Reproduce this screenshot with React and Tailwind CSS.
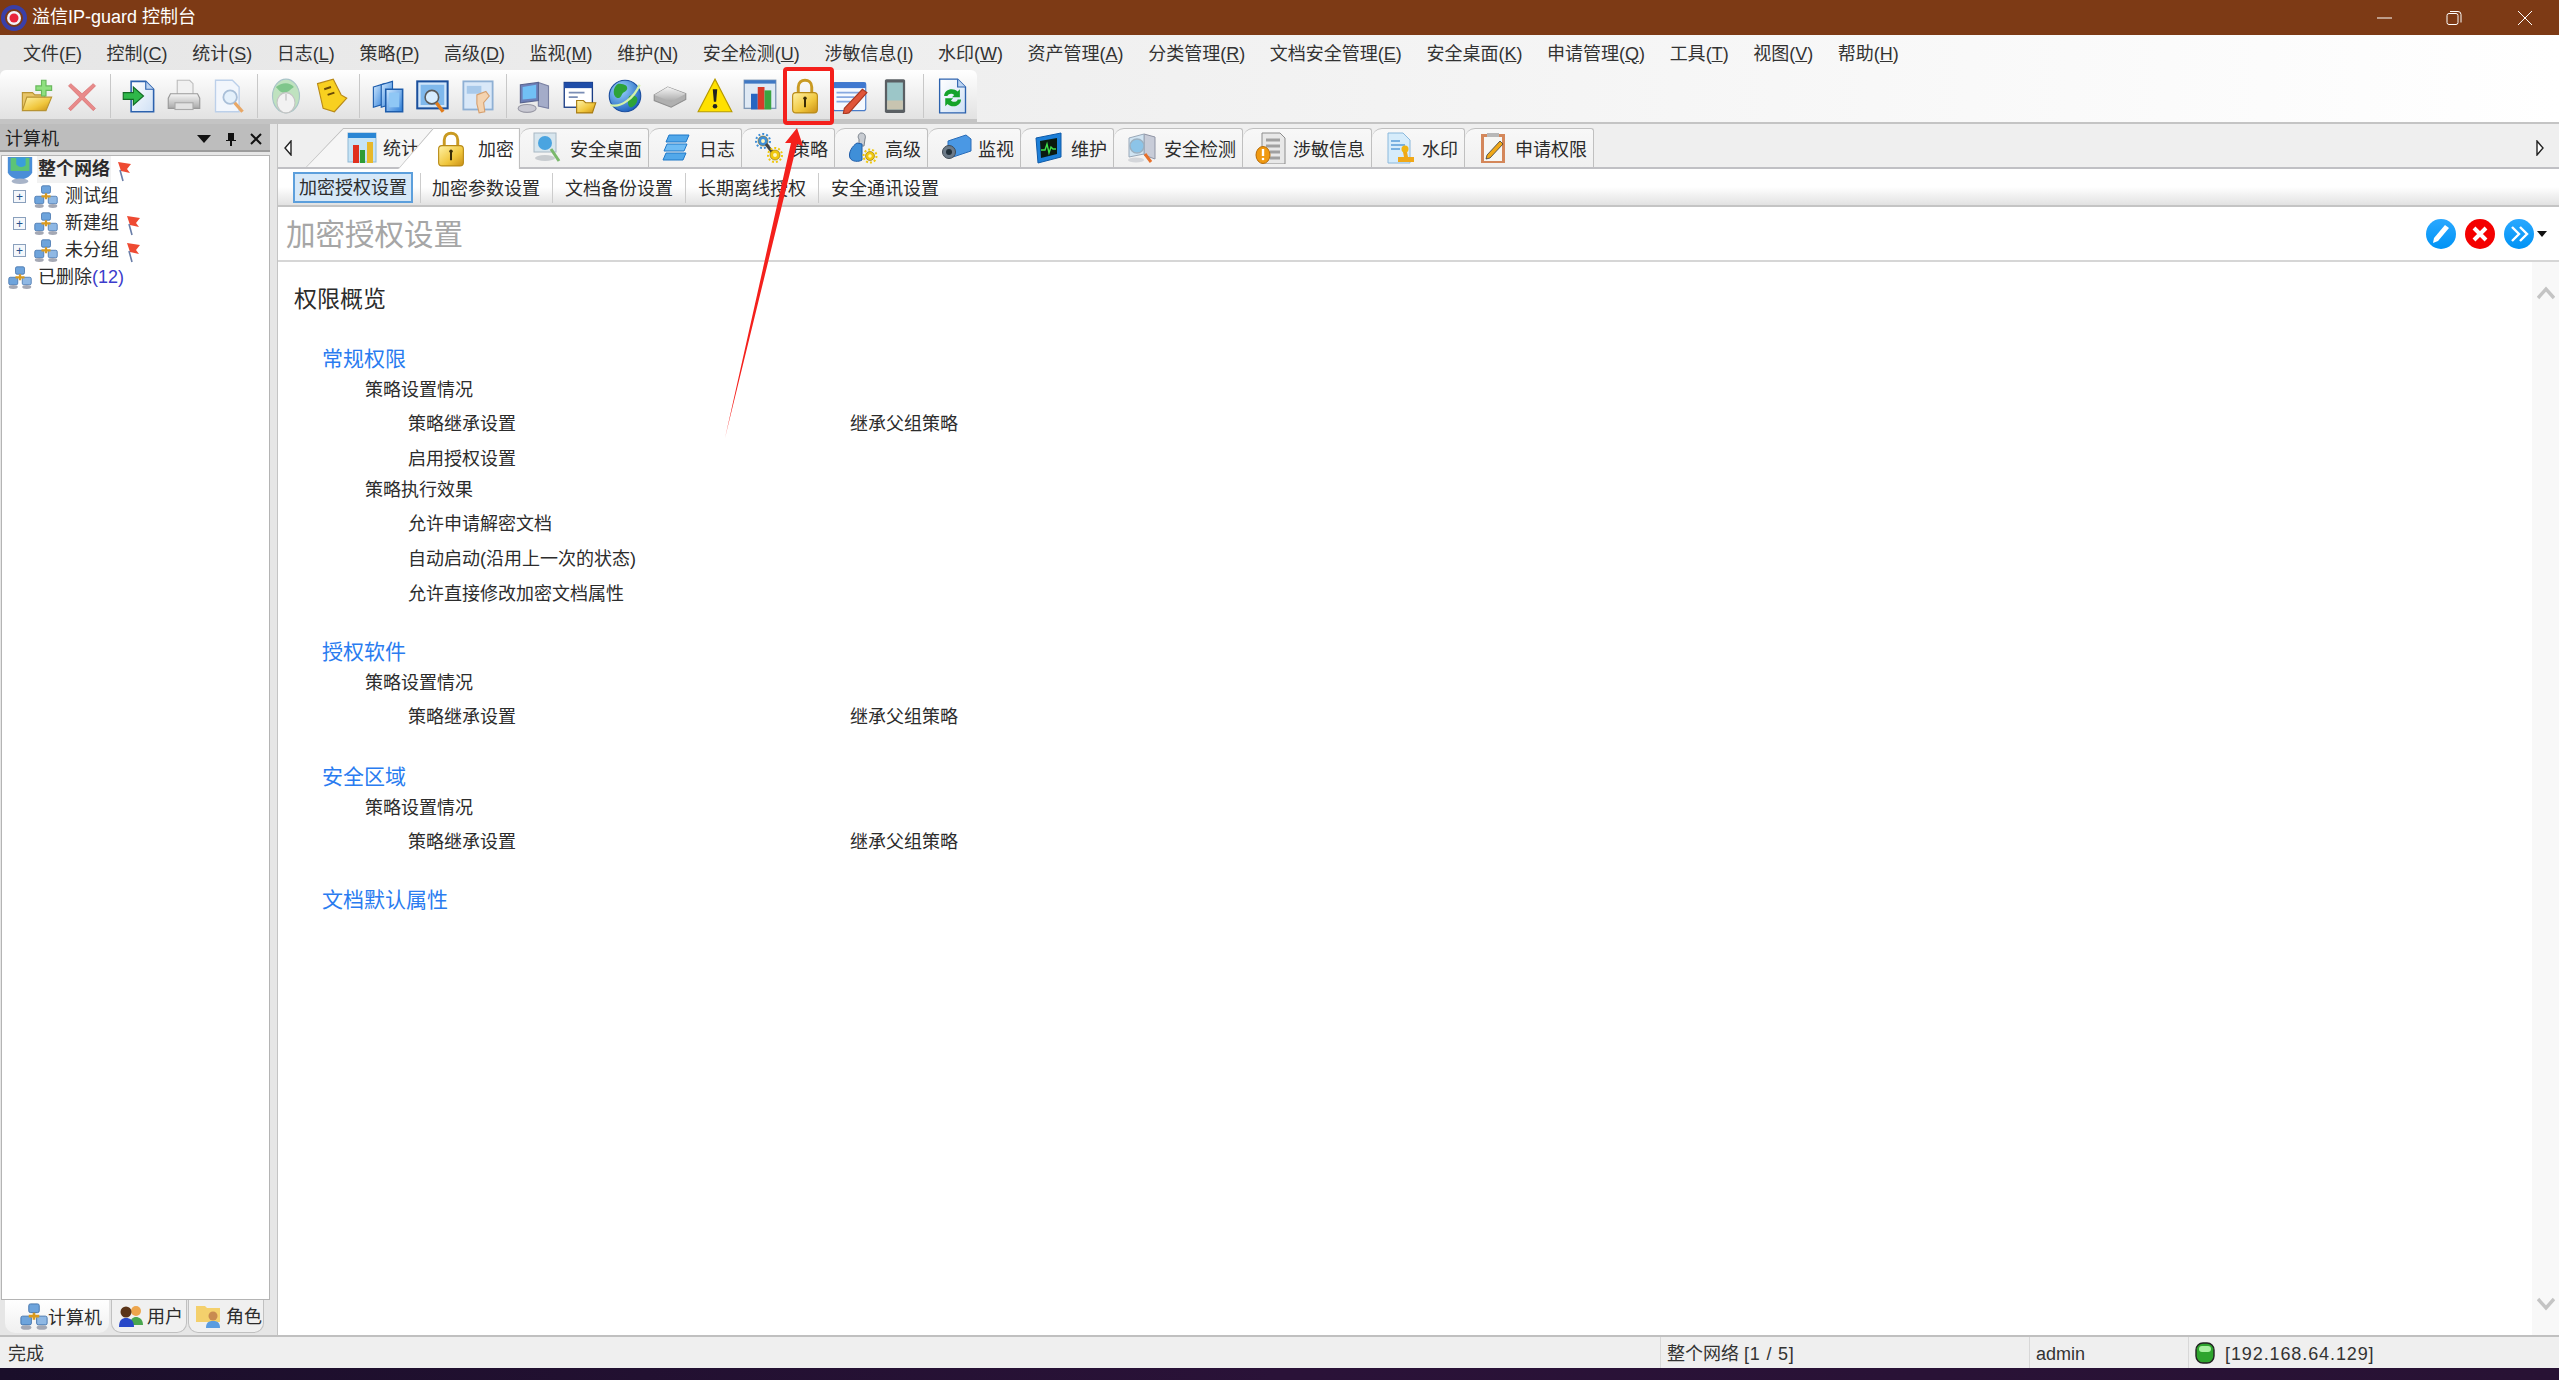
import React from "react";

const Svg = ({ size = 36, children, className = "" }) => (
  <svg width={size} height={size} viewBox="0 0 32 32" className={"shrink-0 " + className}>
    {children}
  </svg>
);

const Defs = () => (
  <svg className="absolute h-0 w-0">
    <defs>
      <linearGradient id="gold" x1="0" y1="0" x2="1" y2="1">
        <stop offset="0" stopColor="#fff3a8" />
        <stop offset="0.6" stopColor="#f0c63c" />
        <stop offset="1" stopColor="#c98f16" />
      </linearGradient>
      <linearGradient id="blue" x1="0" y1="0" x2="1" y2="1">
        <stop offset="0" stopColor="#cfe8ff" />
        <stop offset="1" stopColor="#2f7fd8" />
      </linearGradient>
      <linearGradient id="grey" x1="0" y1="0" x2="0" y2="1">
        <stop offset="0" stopColor="#f6f6f6" />
        <stop offset="1" stopColor="#a9a9a9" />
      </linearGradient>
      <linearGradient id="paper" x1="0" y1="0" x2="1" y2="1">
        <stop offset="0" stopColor="#ffffff" />
        <stop offset="1" stopColor="#cfe0f5" />
      </linearGradient>
      <radialGradient id="earth" cx="0.35" cy="0.3" r="0.8">
        <stop offset="0" stopColor="#9fd8ff" />
        <stop offset="1" stopColor="#1257b8" />
      </radialGradient>
      <linearGradient id="sky" x1="0" y1="0" x2="0" y2="1">
        <stop offset="0" stopColor="#2aa8ff" />
        <stop offset="1" stopColor="#0093f5" />
      </linearGradient>
    </defs>
  </svg>
);

const OpenIcon = () => (
  <Svg>
    <path d="M3 13h9l2 2h9v13H3z" fill="#e8c568" stroke="#b89433" />
    <path d="M7 17h22l-5 12H3z" fill="url(#gold)" stroke="#b89433" />
    <path d="M20 2h4v5h5v4h-5v5h-4v-5h-5V7h5z" fill="#8fe07f" stroke="#68b85c" />
  </Svg>
);
const DeleteIcon = () => (
  <Svg>
    <path d="M6 5l10 9 10-9 2 2-10 10 10 10-2 2-10-10L6 29l-2-2 10-10L4 7z" fill="#e88a8a" stroke="#d66a6a" strokeWidth="0.6" />
  </Svg>
);
const ImportIcon = () => (
  <Svg>
    <path d="M9 3h13l7 7v20H9z" fill="url(#paper)" stroke="#2c62ae" strokeWidth="1.4" />
    <path d="M22 3v7h7" fill="#bcd4f2" stroke="#2c62ae" />
    <path d="M2 13h9V8l9 8-9 8v-5H2z" fill="#2fb84a" stroke="#136b25" />
  </Svg>
);
const PrintIcon = () => (
  <Svg>
    <path d="M10 2h11l3 3v10H10z" fill="#f1f1f1" stroke="#bdbdbd" />
    <path d="M4 14h24l2 4v9H2v-9z" fill="url(#grey)" stroke="#999" />
    <rect x="8" y="22" width="16" height="6" fill="#e2e2e2" stroke="#aaa" />
  </Svg>
);
const PreviewIcon = () => (
  <Svg>
    <path d="M4 2h15l6 6v22H4z" fill="#f2f6fc" stroke="#bcd0ea" strokeWidth="1.2" />
    <circle cx="17" cy="17" r="6" fill="#e4f0fb" stroke="#a9bfd8" strokeWidth="1.6" />
    <path d="M21 22l7 8" stroke="#e8a766" strokeWidth="3" />
  </Svg>
);
const GlobeMouseIcon = () => (
  <Svg>
    <ellipse cx="16" cy="16" rx="12" ry="15" fill="#bfe2bf" stroke="#a8c4c8" />
    <path d="M7 8c5-4 12-5 16 0-3 2-5 5-9 5-3 0-5-3-7-5z" fill="#7fc68b" />
    <ellipse cx="16" cy="22" rx="8" ry="9" fill="#f2f2f2" stroke="#c4c4c4" />
    <path d="M16 14v6" stroke="#bbb" />
  </Svg>
);
const NoteIcon = () => (
  <Svg>
    <path d="M4 5l14-4 7 14 5 3-11 12-10-3z" fill="#f8d020" stroke="#b98a18" />
    <path d="M10 10l6-2M13 15l6-2" stroke="#6a4a08" strokeWidth="1.8" />
  </Svg>
);
const CopiesIcon = () => (
  <Svg>
    <path d="M3 8l10-3v18L3 26z" fill="url(#blue)" stroke="#1d5cab" />
    <path d="M10 6l10-3v20l-10 3z" fill="url(#blue)" stroke="#1d5cab" />
    <path d="M14 10h15v20H14z" fill="url(#blue)" stroke="#1d5cab" strokeWidth="1.4" />
    <rect x="17" y="13" width="9" height="13" fill="#8fc7f5" />
  </Svg>
);
const SearchWinIcon = () => (
  <Svg>
    <rect x="2" y="3" width="27" height="24" fill="#cfe5fa" stroke="#1a4f9c" strokeWidth="1.8" />
    <rect x="5" y="6" width="21" height="18" fill="#7fb8ec" />
    <circle cx="15" cy="17" r="6" fill="#d6ecff" stroke="#5a5a5a" strokeWidth="1.4" />
    <path d="M19 22l6 8" stroke="#e07c1c" strokeWidth="3" />
  </Svg>
);
const HandWinIcon = () => (
  <Svg>
    <rect x="3" y="3" width="26" height="25" fill="#d9e8f8" stroke="#8fb0d4" strokeWidth="1.6" />
    <rect x="6" y="7" width="13" height="7" fill="#a8c9ea" />
    <path d="M15 15l8-3 3 4-5 6 1 8-5 1-2-8z" fill="#f4d3b0" stroke="#d6a070" />
  </Svg>
);
const PcIcon = () => (
  <Svg>
    <path d="M19 4l9 3v20l-9-2z" fill="#a4acc9" stroke="#7b82a3" />
    <path d="M3 6l16-2v16L3 22z" fill="#6d7fb8" stroke="#59648f" />
    <path d="M5 8l12-2v12L5 19z" fill="#71c0f5" />
    <ellipse cx="9" cy="27" rx="8" ry="3.5" fill="#c9c9d3" stroke="#9a9aa6" />
  </Svg>
);
const WindowFolderIcon = () => (
  <Svg>
    <rect x="2" y="4" width="25" height="22" fill="#fff" stroke="#1a3d85" strokeWidth="1.2" />
    <rect x="2" y="4" width="25" height="5" fill="#1f4da8" />
    <path d="M6 13h14M6 17h8" stroke="#7a8db5" strokeWidth="1.6" />
    <path d="M13 20h6l2 2h9l-3 9H13z" fill="url(#gold)" stroke="#a77b12" />
  </Svg>
);
const EarthIcon = () => (
  <Svg>
    <circle cx="16" cy="16" r="14" fill="url(#earth)" stroke="#1c4f9f" />
    <path d="M10 5c4 0 8 1 8 4s-4 3-5 6-4 4-6 1-1-9 3-11zM20 16c3-1 7 0 7 3s-3 7-6 7-3-8-1-10z" fill="#2da339" />
    <path d="M3 24C12 27 24 18 29 6" stroke="#d4f2a8" strokeWidth="2" fill="none" />
  </Svg>
);
const DiskIcon = () => (
  <Svg>
    <path d="M2 15l12-7 16 6v5l-13 7L2 20z" fill="#b0b0b0" stroke="#8f8f8f" />
    <path d="M2 15l12-7 16 6-13 7z" fill="url(#grey)" />
  </Svg>
);
const WarnIcon = () => (
  <Svg>
    <path d="M16 1L31 30H1z" fill="#ffe100" stroke="#b79a00" />
    <path d="M14 10h4l-1 11h-2z" fill="#222" />
    <circle cx="16" cy="25" r="2" fill="#222" />
  </Svg>
);
const ChartWinIcon = () => (
  <Svg>
    <rect x="2" y="2" width="28" height="25" fill="#dfe9f4" stroke="#7f98b6" strokeWidth="1.2" />
    <rect x="2" y="2" width="28" height="3" fill="#3f78c4" />
    <rect x="8" y="14" width="6" height="14" fill="#2766c2" />
    <rect x="14" y="8" width="6" height="20" fill="#d93a2a" />
    <rect x="20" y="11" width="6" height="17" fill="#3ba441" />
  </Svg>
);
const LockIcon = ({ size = 36 }) => (
  <Svg size={size}>
    <path d="M10 14V8c0-8 12-8 12 0v6" fill="none" stroke="#c99a22" strokeWidth="2.6" />
    <rect x="5" y="13" width="22" height="18" rx="3" fill="url(#gold)" stroke="#b88a16" />
    <path d="M16 18v8" stroke="#3a2c06" strokeWidth="1.8" />
    <circle cx="16" cy="18" r="1.5" fill="#3a2c06" />
  </Svg>
);
const PencilWinIcon = () => (
  <Svg>
    <rect x="1" y="4" width="29" height="25" rx="2" fill="#f5f9ff" stroke="#4a7cc8" />
    <rect x="1" y="4" width="29" height="5" fill="#3f78d0" />
    <path d="M4 13h20M4 17h16M4 21h12" stroke="#86a8e0" strokeWidth="1.4" />
    <path d="M27 10l4 3-16 18-5 1 1-5z" fill="#e0553a" stroke="#a83820" />
  </Svg>
);
const PhoneIcon = () => (
  <Svg>
    <rect x="7" y="1" width="18" height="30" rx="1.5" fill="#5a5f63" />
    <rect x="9" y="4" width="14" height="24" fill="#9cc6c8" />
    <path d="M9 20h14v8H9z" fill="#c8c4b0" />
  </Svg>
);
const RefreshIcon = () => (
  <Svg>
    <path d="M5 1h16l7 7v23H5z" fill="url(#paper)" stroke="#2c62ae" strokeWidth="1.2" />
    <path d="M21 1v7h7" fill="#bcd4f2" stroke="#2c62ae" />
    <path d="M9 16c0-6 8-8 12-4l2-2v7h-7l2-2c-2-2-6-1-6 1zM24 19c0 6-8 8-12 4l-2 2v-7h7l-2 2c2 2 6 1 6-1z" fill="#15a32a" />
  </Svg>
);

const StatTabIcon = () => (
  <Svg size={32}>
    <rect x="2" y="1" width="28" height="29" fill="#c6e4f6" stroke="#8fb8d4" />
    <rect x="2" y="1" width="28" height="5" fill="#2a86d4" />
    <rect x="7" y="13" width="6" height="18" fill="#e0301e" />
    <rect x="14" y="18" width="5" height="13" fill="#2e9c34" />
    <rect x="21" y="10" width="6" height="21" fill="#e8b82a" />
  </Svg>
);
const DeskTabIcon = () => (
  <Svg size={32}>
    <rect x="2" y="1" width="22" height="19" fill="#d8e6ee" stroke="#a8b8c4" />
    <circle cx="13" cy="11" r="7" fill="#4aa4e0" />
    <ellipse cx="13" cy="26" rx="10" ry="3" fill="#c8ccd0" />
    <path d="M19 17l8 12" stroke="#7ab86c" strokeWidth="3" />
  </Svg>
);
const LogTabIcon = () => (
  <Svg size={32}>
    <path d="M8 3h20l-3 7H5z" fill="#52a8ea" stroke="#1f78c8" />
    <path d="M6 12h20l-3 7H3z" fill="#6fbcf4" stroke="#1f78c8" />
    <path d="M5 21h20l-3 7H2z" fill="#52a8ea" stroke="#1f78c8" />
  </Svg>
);
const Gear = ({ x, y, r, fill }) => (
  <g>
    <circle cx={x} cy={y} r={r} fill={fill} stroke="#8a6a08" strokeWidth="0.6" />
    <circle cx={x} cy={y} r={r + 2} fill="none" stroke={fill} strokeWidth="2" strokeDasharray="2 2" />
    <circle cx={x} cy={y} r={r / 2.6} fill="#fff6c0" />
  </g>
);
const PolicyTabIcon = () => (
  <Svg size={32}>
    <Gear x={9} y={9} r={5} fill="#3f8fd8" />
    <path d="M12 12l7 9" stroke="#444" strokeWidth="3" />
    <Gear x={21} y={23} r={5} fill="#f0c80e" />
  </Svg>
);
const WrenchTabIcon = () => (
  <Svg size={32}>
    <path d="M14 1c4 0 5 3 4 6l-1 7h-5V7c-2-2 0-6 2-6z" fill="#c8ccd2" stroke="#7a828c" />
    <path d="M10 11c-5 3-9 10-7 15 2 4 9 4 12 2V12z" fill="#3f8fd8" stroke="#1f5ca8" />
    <Gear x={23} y={24} r={4.5} fill="#f0c80e" />
  </Svg>
);
const CameraTabIcon = () => (
  <Svg size={32}>
    <path d="M8 9l18-6 5 4v12l-18 6-5-4z" fill="#4a98e4" stroke="#2a6cb8" />
    <circle cx="9" cy="20" r="6.5" fill="#6c7a88" stroke="#404a54" />
    <circle cx="9" cy="20" r="3" fill="#22303a" />
  </Svg>
);
const MonitorTabIcon = () => (
  <Svg size={32}>
    <path d="M3 6L28 1v24L5 31z" fill="#1c7fd8" stroke="#0f5aa8" />
    <path d="M7 9l17-3v16L8 26z" fill="#0a1a10" />
    <path d="M8 18h4l2-6 2 9 2-6 2 2h3" stroke="#3fe04a" strokeWidth="1.4" fill="none" />
  </Svg>
);
const CheckTabIcon = () => (
  <Svg size={32}>
    <path d="M18 2l11 3v22l-11-4z" fill="#c8ccd8" stroke="#8f94a4" />
    <path d="M3 6l15-4v20L3 25z" fill="#d0e4f2" stroke="#9aa8b8" />
    <circle cx="11" cy="14" r="7" fill="#8cc4e8" stroke="#9cb0c0" strokeWidth="1.4" />
    <path d="M19 22l6 8" stroke="#e8702a" strokeWidth="3" />
    <ellipse cx="10" cy="28" rx="8" ry="2.6" fill="#d4d6da" />
  </Svg>
);
const SensitiveTabIcon = () => (
  <Svg size={32}>
    <path d="M7 1h18l5 5v26H7z" fill="#e8e8e8" stroke="#8c8c8c" />
    <path d="M11 8h14M11 14h14M15 20h10M15 26h10" stroke="#a0a0a0" strokeWidth="3" />
    <ellipse cx="8" cy="23" rx="7" ry="8.5" fill="#f09a12" stroke="#b86c08" />
    <path d="M8 17v7" stroke="#fff" strokeWidth="2.4" />
    <circle cx="8" cy="27" r="1.3" fill="#fff" />
  </Svg>
);
const StampTabIcon = () => (
  <Svg size={32}>
    <path d="M4 1h15l7 7v23H4z" fill="#d6ecfb" stroke="#8ab8dc" />
    <path d="M7 9h9M7 13h14M7 17h9" stroke="#5a9cd8" strokeWidth="1.4" />
    <circle cx="21" cy="17" r="3.5" fill="#f0b414" />
    <path d="M19 20h4l1 5h6v5H14v-5h6z" fill="#f0a818" />
  </Svg>
);
const ClipTabIcon = () => (
  <Svg size={32}>
    <rect x="4" y="2" width="24" height="29" fill="#d4875a" />
    <rect x="7" y="5" width="18" height="24" fill="#f6f6f4" />
    <rect x="10" y="1" width="12" height="4" fill="#b8b8b8" />
    <path d="M23 9l3 3-13 14-4 1 1-4z" fill="#f0a818" stroke="#3a3a3a" strokeWidth="0.8" />
  </Svg>
);

const GroupIcon = ({ size = 24 }) => (
  <Svg size={size}>
    <rect x="10" y="1" width="12" height="10" rx="2" fill="#6ea4dc" stroke="#3d6ea8" />
    <rect x="1" y="15" width="12" height="10" rx="2" fill="#6ea4dc" stroke="#3d6ea8" />
    <rect x="19" y="15" width="12" height="10" rx="2" fill="#8fb8e4" stroke="#3d6ea8" />
    <path d="M16 11v8M10 15h12" stroke="#d89a20" strokeWidth="3" />
    <ellipse cx="7" cy="28" rx="6" ry="2.6" fill="#a4a8b4" />
    <ellipse cx="25" cy="28" rx="6" ry="2.6" fill="#a4a8b4" />
  </Svg>
);
const NetIcon = () => (
  <Svg size={30}>
    <path d="M3 2h26v17c-3 5-8 7-13 7S6 24 3 19z" fill="#4a8ed8" />
    <path d="M6 3h20v14H6z" fill="#5cc476" />
    <path d="M12 3h10v8c-3 3-7 2-10-1z" fill="#3a9edc" />
    <ellipse cx="16" cy="28" rx="9" ry="3" fill="#a8b4c8" />
  </Svg>
);
const FlagIcon = () => (
  <svg width="16" height="24" viewBox="0 0 16 24" className="shrink-0">
    <path d="M2 4l13 2-4 5 3 4-9-2z" fill="#ee4a32" />
    <path d="M4 12l3 11" stroke="#6a7ea8" strokeWidth="1.6" />
  </svg>
);

const Expander = () => (
  <div className="flex h-[13px] w-[13px] shrink-0 items-center justify-center border border-[#8aa0bc] bg-[#f4f7fb] text-[12px] leading-none text-[#24508c]">
    +
  </div>
);

const menus = [
  ["文件", "F"],
  ["控制", "C"],
  ["统计", "S"],
  ["日志", "L"],
  ["策略", "P"],
  ["高级", "D"],
  ["监视", "M"],
  ["维护", "N"],
  ["安全检测", "U"],
  ["涉敏信息", "I"],
  ["水印", "W"],
  ["资产管理", "A"],
  ["分类管理", "R"],
  ["文档安全管理", "E"],
  ["安全桌面", "K"],
  ["申请管理", "Q"],
  ["工具", "T"],
  ["视图", "V"],
  ["帮助", "H"],
];

const tools = [
  [OpenIcon, DeleteIcon],
  [ImportIcon, PrintIcon, PreviewIcon],
  [GlobeMouseIcon, NoteIcon],
  [CopiesIcon, SearchWinIcon, HandWinIcon],
  [PcIcon, WindowFolderIcon, EarthIcon, DiskIcon, WarnIcon, ChartWinIcon, LockIcon, PencilWinIcon, PhoneIcon],
  [RefreshIcon],
];

const tabs = [
  ["安全桌面", DeskTabIcon, "w-[129px]"],
  ["日志", LogTabIcon, "w-[93px]"],
  ["策略", PolicyTabIcon, "w-[93px]"],
  ["高级", WrenchTabIcon, "w-[93px]"],
  ["监视", CameraTabIcon, "w-[93px]"],
  ["维护", MonitorTabIcon, "w-[93px]"],
  ["安全检测", CheckTabIcon, "w-[129px]"],
  ["涉敏信息", SensitiveTabIcon, "w-[129px]"],
  ["水印", StampTabIcon, "w-[93px]"],
  ["申请权限", ClipTabIcon, "w-[129px]"],
];

const subTabs = ["加密参数设置", "文档备份设置", "长期离线授权", "安全通讯设置"];

const Inherit = () => <div className="ml-[442px]">继承父组策略</div>;

const Level2 = ({ children }) => (
  <div className="mb-[4px] flex h-[26px] items-center pl-[86px] text-[18px]">{children}</div>
);
const Level3 = ({ children, value }) => (
  <div className="flex h-[35px] items-center pl-[129px] text-[18px]">
    <div className="w-[0px] whitespace-nowrap">{children}</div>
    {value && <Inherit />}
  </div>
);
const Section = ({ children, className = "" }) => (
  <div className={"mb-[3px] flex h-[30px] items-center pl-[43px] text-[21px] text-[#2a7cf0] " + className}>{children}</div>
);

const TreeRow = ({ name, flag }) => (
  <div className="flex h-[27px] items-center">
    <div className="ml-[11px] w-[21px]">
      <Expander />
    </div>
    <GroupIcon />
    <span className="ml-[7px]">{name}</span>
    {flag && <span className="ml-[6px]"><FlagIcon /></span>}
  </div>
);

export default function App() {
  return (
    <div className="relative flex h-screen w-full flex-col overflow-hidden bg-[#e6e6e6] font-['Liberation_Sans','Noto_Sans_CJK_SC',sans-serif] text-[#2c2c2c]">
      <Defs />

      {/* title bar */}
      <div className="flex h-[35px] shrink-0 items-center bg-[#7d3a15] text-[18px] text-white">
        <svg width="26" height="30" viewBox="0 0 26 30" className="ml-[1px] shrink-0">
          <circle cx="13" cy="15" r="11" fill="none" stroke="#3a3fa8" strokeWidth="4" />
          <circle cx="13" cy="15" r="7" fill="#f2f2f8" />
          <circle cx="13" cy="15" r="4.5" fill="#e8243c" />
        </svg>
        <span className="ml-[5px] whitespace-nowrap">溢信IP-guard 控制台</span>
        <div className="ml-auto flex items-center">
          <svg width="16" height="16" viewBox="0 0 16 16" className="mr-[53px]"><path d="M0 8h15" stroke="#fff" /></svg>
          <svg width="16" height="16" viewBox="0 0 16 16" className="mr-[55px]">
            <rect x="1" y="3.5" width="11" height="11" rx="2" fill="none" stroke="#fff" />
            <path d="M4 1.5h8a3 3 0 0 1 3 3v8" fill="none" stroke="#fff" />
          </svg>
          <svg width="16" height="16" viewBox="0 0 16 16" className="mr-[26px]"><path d="M1 1l14 14M15 1L1 15" stroke="#fff" /></svg>
        </div>
      </div>

      {/* menu + toolbar band */}
      <div className="relative h-[87px] shrink-0 bg-gradient-to-r from-[#e6e6e6] via-[#f2f2f2] to-white">
        <div className="flex h-[35px] items-center gap-[24.6px] pl-[23px] pt-[3px] text-[18px] text-[#333]">
          {menus.map(([name, key], i) => (
            <span key={i} className="whitespace-nowrap">
              {name}(<span className="underline">{key}</span>)
            </span>
          ))}
        </div>
        <div className="flex h-[52px] w-[977px] items-center rounded-tr-[6px] rounded-tl-[6px] border-b-[3px] border-[#c4c4c4] bg-gradient-to-b from-white to-[#e2e2e2] pl-[14px] pt-[2px]">
          {tools.map((group, g) => (
            <React.Fragment key={g}>
              {g > 0 && (
                <div className="flex h-[44px] w-[12px] justify-center">
                  <div className="h-full w-[1px] bg-[#c8c8c8]" />
                </div>
              )}
              {group.map((Icon, i) => (
                <div key={i} className="flex w-[45px] justify-center">
                  <Icon />
                </div>
              ))}
            </React.Fragment>
          ))}
        </div>
      </div>

      {/* main */}
      <div className="flex min-h-0 flex-1">
        {/* left panel */}
        <aside className="flex w-[277px] shrink-0 flex-col border-t-[2px] border-[#c4c4c4] pr-[7px]">
          <div className="flex h-[28px] shrink-0 items-center border-b-[2px] border-[#9c9c9c] bg-[#bdbdbd] pl-[5px] pt-[4px] text-[18px] text-[#222]">
            计算机
            <div className="ml-auto flex items-center text-[#111]">
              <svg width="14" height="10" viewBox="0 0 14 10" className="mr-[14px]"><path d="M0 1h14L7 9z" fill="#111" /></svg>
              <svg width="12" height="14" viewBox="0 0 12 14" className="mr-[13px]"><path d="M3 1h6v7h2v1H7v5H5V9H1V8h2z" fill="#111" /></svg>
              <svg width="12" height="12" viewBox="0 0 12 12" className="mr-[8px]"><path d="M1 1l10 10M11 1L1 11" stroke="#111" strokeWidth="2" /></svg>
            </div>
          </div>
          <div className="mt-[3px] ml-[1px] min-h-0 flex-1 border border-[#b4b4b4] bg-white text-[18px]">
            <div className="flex h-[27px] items-center">
              <span className="ml-[3px] w-[30px]"><NetIcon /></span>
              <span className="ml-[2px] bg-[#f2f2f2] px-[1px] font-bold">整个网络</span>
              <span className="ml-[5px]"><FlagIcon /></span>
            </div>
            <TreeRow name="测试组" />
            <TreeRow name="新建组" flag />
            <TreeRow name="未分组" flag />
            <div className="flex h-[27px] items-center">
              <span className="ml-[6px]"><GroupIcon /></span>
              <span className="ml-[6px]">已删除<span className="text-[#3c3ccc]">(12)</span></span>
            </div>
          </div>
          <div className="flex h-[35px] shrink-0 items-start pl-[5px] text-[18px]">
            <div className="flex h-[33px] w-[104px] items-center rounded-b-[10px] bg-gradient-to-b from-white to-[#f0f0f0] pl-[15px]">
              <GroupIcon size={28} />
              <span className="pt-[3px]">计算机</span>
            </div>
            <div className="ml-[2px] flex h-[33px] w-[76px] items-center rounded-b-[10px] border-x border-b border-[#c0c0c0] bg-[#f0f0f0] pl-[6px]">
              <svg width="26" height="26" viewBox="0 0 26 26" className="shrink-0">
                <circle cx="18" cy="8" r="5" fill="#eda54c" />
                <path d="M12 22c0-6 3-8 6-8s7 2 7 8z" fill="#49a64e" />
                <circle cx="8" cy="9" r="5.5" fill="#5a3418" />
                <path d="M1 24c0-7 3-9 7-9s8 2 8 9z" fill="#2848c8" />
              </svg>
              <span className="ml-[3px] pt-[3px]">用户</span>
            </div>
            <div className="ml-[1px] flex h-[33px] w-[76px] items-center rounded-b-[10px] border-x border-b border-[#c0c0c0] bg-[#f0f0f0] pl-[6px]">
              <svg width="28" height="26" viewBox="0 0 28 26" className="shrink-0">
                <path d="M1 3h9l2 2h13v14H1z" fill="#f4d06c" />
                <circle cx="18" cy="13" r="4.5" fill="#c88a50" />
                <path d="M11 25c0-6 3-7 7-7s7 1 7 7z" fill="#5a9ce0" />
              </svg>
              <span className="ml-[3px] pt-[3px]">角色</span>
            </div>
          </div>
        </aside>

        {/* right area */}
        <main className="flex min-w-0 flex-1 flex-col border-l-[1px] border-t-[2px] border-[#c4c4c4]">
          {/* tab row */}
          <div className="flex h-[45px] shrink-0 items-end border-b-[2px] border-[#c0c0c4] bg-[#efefef] pl-[6px] text-[18px]">
            <svg width="8" height="16" viewBox="0 0 8 16" className="mb-[11px] shrink-0"><path d="M7 1v14L1 8z" fill="#fff" stroke="#222" strokeWidth="1.4" /></svg>
            <div className="relative ml-[14px] flex h-[39px] w-[127px] shrink-0 items-center bg-[#f6f6f6] pl-[40px] [clip-path:polygon(0_100%,37px_0,100%_0,100%_100%)]">
              <svg width="127" height="39" viewBox="0 0 127 39" className="absolute left-0 top-0">
                <path d="M0 39L37 0.5H127" fill="none" stroke="#c0c0c0" strokeWidth="1.2" />
              </svg>
              <StatTabIcon />
              <span className="ml-[5px] whitespace-nowrap pt-[4px]">统计</span>
            </div>
            <div className="relative z-10 -mb-[2px] -ml-[35px] flex h-[41px] w-[122px] shrink-0 items-center bg-white pl-[35px] [clip-path:polygon(0_100%,35px_0,100%_0,100%_100%)]">
              <svg width="122" height="41" viewBox="0 0 122 41" className="absolute left-0 top-0">
                <path d="M0 41L35 0.5H121.5V41" fill="none" stroke="#c0c0c0" strokeWidth="1.2" />
              </svg>
              <LockIcon />
              <span className="ml-[9px] whitespace-nowrap pt-[4px]">加密</span>
            </div>
            {tabs.map(([name, Icon, w], i) => (
              <div key={i} className={"flex h-[39px] shrink-0 items-center rounded-tl-[10px] rounded-tr-[3px] border-r border-t border-[#c0c0c0] bg-gradient-to-b from-[#f8f8f8] to-[#f0f0f0] pl-[12px] " + w}>
                <Icon />
                <span className="ml-[6px] whitespace-nowrap pt-[4px]">{name}</span>
              </div>
            ))}
            <svg width="8" height="16" viewBox="0 0 8 16" className="mb-[11px] ml-auto mr-[15px] shrink-0"><path d="M1 1v14l6-7z" fill="#fff" stroke="#222" strokeWidth="1.4" /></svg>
          </div>

          {/* sub tabs */}
          <div className="flex h-[38px] shrink-0 items-center border-b-[2px] border-[#c4c4c4] bg-gradient-to-b from-white via-white to-[#e2e2e2] pl-[15px] pt-[1px] text-[18px]">
            <div className="flex h-[31px] w-[120px] items-center justify-center whitespace-nowrap border-2 border-[#5c9fdc] bg-[#d6e8f8] pt-[2px]">加密授权设置</div>
            <div className="ml-[7px] h-[30px] w-[1px] bg-[#cccccc]" />
            {subTabs.map((name, i) => (
              <React.Fragment key={i}>
                <div className="whitespace-nowrap px-[11px] pt-[4px]">{name}</div>
                {i < subTabs.length - 1 && <div className="mx-[1px] h-[30px] w-[1px] bg-[#cccccc]" />}
              </React.Fragment>
            ))}
          </div>

          {/* page header */}
          <div className="flex h-[55px] shrink-0 items-center border-b-[2px] border-[#d6d6d6] bg-white pl-[8px] text-[29.5px] text-[#a6a6a6]">
            <span className="pt-[4px]">加密授权设置</span>
            <div className="ml-auto flex items-center pr-[12px]">
              <svg width="32" height="32" viewBox="0 0 32 32">
                <circle cx="16" cy="16" r="15" fill="url(#sky)" />
                <path d="M20 7l4 3-11 13-5 2 1-5z" fill="#fff" />
              </svg>
              <svg width="32" height="32" viewBox="0 0 32 32" className="ml-[7px]">
                <circle cx="16" cy="16" r="15" fill="#f40000" />
                <path d="M10 10l12 12M22 10L10 22" stroke="#fff" strokeWidth="4" />
              </svg>
              <svg width="32" height="32" viewBox="0 0 32 32" className="ml-[7px]">
                <circle cx="16" cy="16" r="15" fill="url(#sky)" />
                <path d="M9 9l7 7-7 7M17 9l7 7-7 7" fill="none" stroke="#fff" strokeWidth="2.4" />
              </svg>
              <svg width="10" height="6" viewBox="0 0 10 6" className="ml-[2px]"><path d="M0 0h10L5 6z" fill="#111" /></svg>
            </div>
          </div>

          {/* content */}
          <div className="flex min-h-0 flex-1 bg-white">
            <div className="min-w-0 flex-1 pl-[1px] pt-[21px] text-[#2c2c2c]">
              <div className="mb-[29px] flex h-[32px] items-center pl-[15px] text-[23px]">权限概览</div>
              <Section>常规权限</Section>
              <Level2>策略设置情况</Level2>
              <Level3 value>策略继承设置</Level3>
              <Level3>启用授权设置</Level3>
              <Level2>策略执行效果</Level2>
              <Level3>允许申请解密文档</Level3>
              <Level3>自动启动(沿用上一次的状态)</Level3>
              <Level3>允许直接修改加密文档属性</Level3>
              <Section className="mt-[25px]">授权软件</Section>
              <Level2>策略设置情况</Level2>
              <Level3 value>策略继承设置</Level3>
              <Section className="mt-[27px]">安全区域</Section>
              <Level2>策略设置情况</Level2>
              <Level3 value>策略继承设置</Level3>
              <Section className="mt-[25px]">文档默认属性</Section>
            </div>
            <div className="flex w-[27px] shrink-0 flex-col items-center justify-between bg-[#f8f8f8] pb-[24px] pt-[24px]">
              <svg width="18" height="14" viewBox="0 0 18 14"><path d="M1 12l8-9 8 9" fill="none" stroke="#c4c4c4" strokeWidth="3.4" /></svg>
              <svg width="18" height="14" viewBox="0 0 18 14"><path d="M1 2l8 9 8-9" fill="none" stroke="#c4c4c4" strokeWidth="3.4" /></svg>
            </div>
          </div>
        </main>
      </div>

      {/* status bar */}
      <div className="flex h-[33px] shrink-0 items-center border-t-[2px] border-[#c0c0c0] bg-[#efefef] pl-[8px] text-[18px] text-[#333]">
        <div className="w-[1652px] pt-[4px]">完成</div>
        <div className="flex h-full w-[369px] items-center whitespace-nowrap border-l border-[#d8d8d8] pl-[6px] pt-[4px]">
          整个网络 <span className="ml-[5px] tracking-[0.8px]">[1 / 5]</span>
        </div>
        <div className="flex h-full w-[159px] items-center border-l border-[#d8d8d8] pl-[6px] pt-[4px]">admin</div>
        <div className="flex h-full items-center border-l border-[#d8d8d8] pl-[6px]">
          <svg width="20" height="22" viewBox="0 0 20 22" className="shrink-0">
            <rect x="1" y="1" width="18" height="20" rx="7" fill="#2ea42e" stroke="#222" strokeWidth="1.4" />
            <rect x="4" y="4" width="12" height="6" rx="3" fill="#a8f0a0" />
          </svg>
          <span className="ml-[10px] pt-[4px] tracking-[0.9px]">[192.168.64.129]</span>
        </div>
      </div>
      <div className="h-[12px] shrink-0 bg-gradient-to-r from-[#1a0e2a] via-[#2a1238] to-[#281234]" />

      {/* annotation */}
      <div className="absolute left-[783px] top-[67px] h-[58px] w-[51px] rounded-[4px] border-[4px] border-[#f4201c]" />
      <svg width="120" height="320" viewBox="0 0 120 320" className="absolute left-[700px] top-[125px]">
        <path d="M25 313L91 18L85 18L97 3L103 21L97 19Z" fill="#f4201c" />
      </svg>
    </div>
  );
}
